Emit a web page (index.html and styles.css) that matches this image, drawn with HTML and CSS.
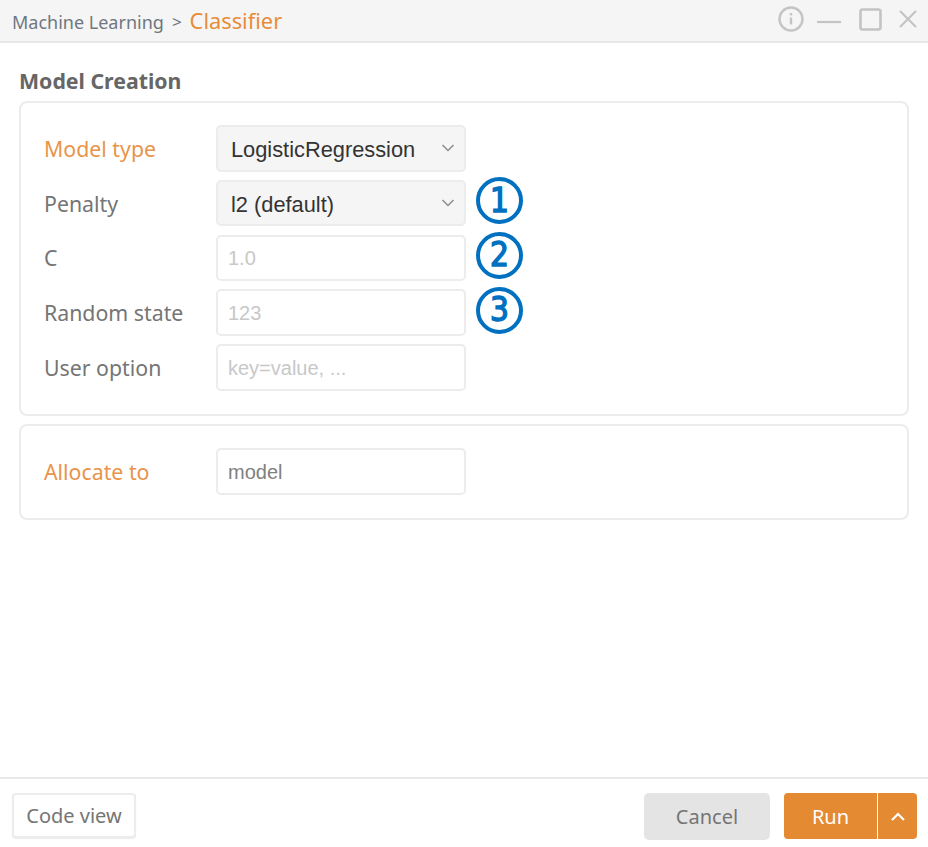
FILE: index.html
```html
<!DOCTYPE html>
<html lang="en">

<head>
    <meta charset="UTF-8">
    <meta name="viewport" content="width=device-width, initial-scale=1.0">
    <title>Classifier</title>
    <link rel="stylesheet" href="styles.css">
</head>

<body>
    <div class="title-bar">
        <div class="crumbs">
            <span class="crumb-parent">Machine Learning</span>
            <span class="crumb-sep">&gt;</span>
            <span class="crumb-current">Classifier</span>
        </div>
        <div class="window-icons">
            <svg class="icon-info" width="26" height="26" viewBox="0 0 26 26" fill="none" stroke="#c4c4c4" stroke-width="2.4">
                <circle cx="13" cy="13" r="11.5" />
                <path d="M13 11.5v7" />
                <path d="M13 7v2.4" />
            </svg>
            <svg class="icon-min" width="24" height="26" viewBox="0 0 24 26" fill="none" stroke="#c4c4c4" stroke-width="2.2">
                <path d="M0 16h24" />
            </svg>
            <svg class="icon-max" width="23" height="23" viewBox="0 0 23 23" fill="none" stroke="#c4c4c4" stroke-width="2.6">
                <rect x="1.5" y="1.5" width="20" height="20" rx="2" />
            </svg>
            <svg class="icon-close" width="18" height="18" viewBox="0 0 18 18" fill="none" stroke="#c4c4c4" stroke-width="2.2">
                <path d="M1 1l16 16M17 1L1 17" />
            </svg>
        </div>
    </div>

    <div class="content">
        <div class="section-title">Model Creation</div>

        <div class="card card-model">
            <div class="row">
                <label class="row-label accent">Model type</label>
                <div class="field field-select">
                    <span class="field-value">LogisticRegression</span>
                    <svg class="chevron" width="14" height="8" viewBox="0 0 14 8" fill="none" stroke="#8c8c8c" stroke-width="1.5">
                        <path d="M1.5 1l5.5 5.5L12.5 1" />
                    </svg>
                </div>
            </div>
            <div class="row">
                <label class="row-label">Penalty</label>
                <div class="field field-select">
                    <span class="field-value">l2 (default)</span>
                    <svg class="chevron" width="14" height="8" viewBox="0 0 14 8" fill="none" stroke="#8c8c8c" stroke-width="1.5">
                        <path d="M1.5 1l5.5 5.5L12.5 1" />
                    </svg>
                </div>
                <span class="marker">1</span>
            </div>
            <div class="row">
                <label class="row-label">C</label>
                <div class="field"><span class="placeholder">1.0</span></div>
                <span class="marker">2</span>
            </div>
            <div class="row">
                <label class="row-label">Random state</label>
                <div class="field"><span class="placeholder">123</span></div>
                <span class="marker">3</span>
            </div>
            <div class="row">
                <label class="row-label">User option</label>
                <div class="field"><span class="placeholder">key=value, ...</span></div>
            </div>
        </div>

        <div class="card card-allocate">
            <div class="row">
                <label class="row-label accent">Allocate to</label>
                <div class="field"><span class="filled">model</span></div>
            </div>
        </div>
    </div>

    <div class="footer">
        <button class="btn btn-code">Code view</button>
        <div class="footer-right">
            <button class="btn btn-cancel">Cancel</button>
            <div class="run-group">
                <button class="btn btn-run">Run</button>
                <button class="btn btn-more">
                    <svg width="16" height="9" viewBox="0 0 16 9" fill="none" stroke="#ffffff" stroke-width="2.2">
                        <path d="M2 8l6-6 6 6" />
                    </svg>
                </button>
            </div>
        </div>
    </div>
</body>

</html>
```

FILE: styles.css
```css
/* page */
html,
body {
    margin: 0;
    padding: 0;
}

body {
    width: 928px;
    height: 847px;
    display: flex;
    flex-direction: column;
    overflow: hidden;
    background-color: #fff;
    font-family: "Noto Sans", "Noto Sans CJK KR", sans-serif;
}

/* title bar */
.title-bar {
    height: 41px;
    flex: none;
    display: flex;
    justify-content: space-between;
    align-items: center;
    padding: 0 11px 0 12px;
    background-color: #f5f5f5;
    border-bottom: 2px solid #e8e8e8;
}

.crumbs {
    display: flex;
    align-items: center;
    gap: 8px;
    color: #6f7780;
    font-size: 18px;
    padding-top: 2px;
}

.crumb-sep {
    font-size: 17px;
}

.crumb-current {
    color: #e88c3a;
    font-size: 21.8px;
    margin-top: -3px;
}

.window-icons {
    display: flex;
    align-items: center;
    margin-top: -3px;
}

.icon-min {
    margin-left: 13px;
}

.icon-max {
    margin-left: 18px;
}

.icon-close {
    margin-left: 17px;
}

/* main area */
.content {
    flex: 1;
    padding: 24px 19px 0;
}

.section-title {
    height: 34px;
    color: #666;
    font-size: 21.3px;
    font-weight: 700;
    line-height: 28px;
}

.card {
    box-sizing: border-box;
    width: 890px;
    padding: 22px 23px;
    border: 2px solid #ececec;
    border-radius: 8px;
}

.card-model {
    height: 315px;
    display: flex;
    flex-direction: column;
    gap: 8.25px;
    margin-bottom: 8px;
}

.card-allocate {
    height: 96px;
}

.row {
    display: flex;
    align-items: center;
    height: 46.5px;
}

.row-label {
    width: 172px;
    flex: none;
    color: #757575;
    font-size: 21.3px;
}

.row-label.accent {
    color: #e8944a;
}

.field {
    box-sizing: border-box;
    width: 250px;
    height: 100%;
    flex: none;
    display: flex;
    align-items: center;
    justify-content: space-between;
    padding: 2px 10px 0;
    border: 2px solid #ececec;
    border-radius: 5px;
    font-family: "Liberation Sans", Arial, sans-serif;
    font-size: 20px;
}

.field-select {
    padding: 0 9px 0 13px;
    background-color: #f5f5f5;
}

.field-value {
    color: #333;
    font-size: 21.8px;
    padding-top: 3px;
}

.placeholder {
    color: #c8c8c8;
}

.filled {
    color: #808080;
}

/* numbered callouts */
.marker {
    box-sizing: border-box;
    width: 47px;
    height: 47px;
    flex: none;
    margin: 0 0 5px 10px;
    display: flex;
    align-items: center;
    justify-content: center;
    border: 4.5px solid #0070c0;
    border-radius: 50%;
    color: #0070c0;
    -webkit-text-stroke: 1.4px #0070c0;
    font-family: "DejaVu Sans", sans-serif;
    font-stretch: condensed;
    font-size: 33px;
    line-height: 38px;
}

/* footer */
.footer {
    height: 70px;
    flex: none;
    display: flex;
    justify-content: space-between;
    padding: 14px 11px 0 12px;
    box-sizing: border-box;
    border-top: 2px solid #e8e8e8;
}

.btn {
    margin: 0;
    padding: 0;
    font-family: inherit;
    font-size: 20px;
    cursor: pointer;
}

.btn-code {
    width: 124px;
    height: 45px;
    border: 2px solid #ececec;
    border-radius: 4px;
    background-color: #fff;
    color: #757575;
    box-shadow: 0 1px 1px rgba(0, 0, 0, 0.08);
}

.footer-right {
    display: flex;
    gap: 14px;
}

.btn-cancel {
    width: 126px;
    height: 47px;
    border: none;
    border-radius: 5px;
    background-color: #e4e4e4;
    color: #757575;
}

.run-group {
    display: flex;
    gap: 1px;
}

.btn-run {
    width: 93px;
    height: 46px;
    border: none;
    border-radius: 4px 0 0 4px;
    background-color: #e38a33;
    color: #fff;
}

.btn-more {
    width: 39px;
    height: 46px;
    border: none;
    border-radius: 0 4px 4px 0;
    background-color: #e38a33;
}

.btn-more svg {
    display: block;
    margin: 0 auto;
}
```
